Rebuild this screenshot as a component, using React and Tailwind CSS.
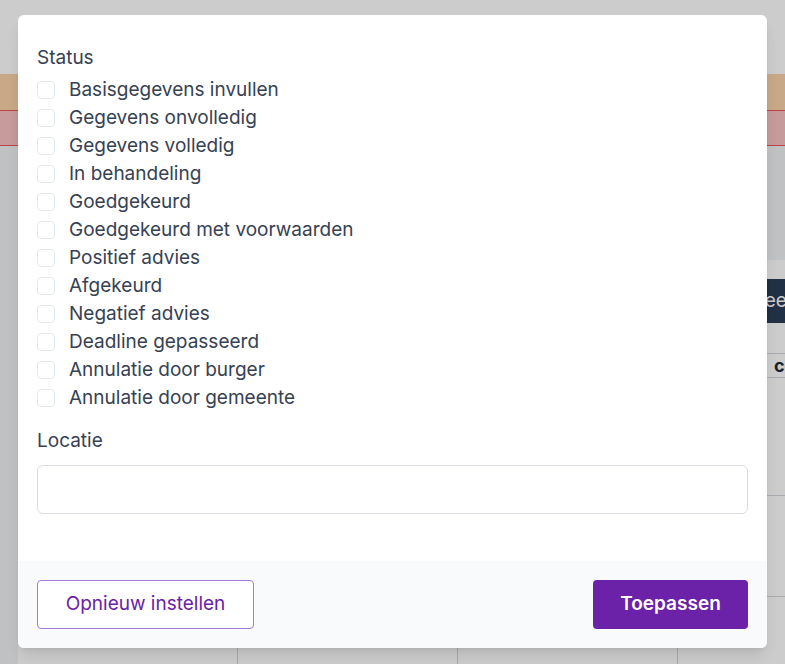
import React from 'react';

const statuses = [
  'Basisgegevens invullen',
  'Gegevens onvolledig',
  'Gegevens volledig',
  'In behandeling',
  'Goedgekeurd',
  'Goedgekeurd met voorwaarden',
  'Positief advies',
  'Afgekeurd',
  'Negatief advies',
  'Deadline gepasseerd',
  'Annulatie door burger',
  'Annulatie door gemeente',
];

function BackgroundPage() {
  // the page behind the dialog, mostly hidden
  return (
    <div className="flex h-full flex-col bg-[#f1f2f4]">
      <div className="h-[74px] shrink-0 bg-white" />
      <div className="h-[36px] shrink-0 bg-[#fad2a8]" />
      <div className="h-[36px] shrink-0 border-y border-[#f05252] bg-[#f9c1c3]" />
      <div className="flex flex-1 pl-[18px] pt-[114px]">
        <div className="flex flex-1 flex-col bg-white">
          <div className="flex h-[93px] items-start pt-[19px]">
            <div className="ml-[713px] flex h-[44px] shrink-0 items-center bg-[#2a3c55] px-4 text-[19px] text-white">
              Weergave
            </div>
          </div>
          <div className="flex flex-1 border-t border-[#d1d5db]">
            {[0, 1, 2, 3].map((i) => (
              <div key={i} className="flex w-[220px] shrink-0 flex-col border-r border-[#d1d5db]">
                <div className="flex h-[24px] items-center border-b border-[#d1d5db] pl-[96px] text-lg font-bold text-[#1f2937]">
                  {i === 3 ? 'code' : ''}
                </div>
                <div className="h-[118px] border-b border-[#d1d5db]" />
                <div className="h-[101px] border-b border-[#d1d5db]" />
              </div>
            ))}
          </div>
        </div>
      </div>
    </div>
  );
}

export default function App() {
  return (
    <div className="relative h-[664px] w-[785px] overflow-hidden font-['Inter',sans-serif]">
      <BackgroundPage />
      <div className="absolute inset-0 bg-black/20" />

      <div className="absolute left-[18px] top-[15px] flex h-[633px] w-[749px] flex-col overflow-hidden rounded-md bg-white shadow-lg">
        <div className="px-[19px] pt-[29px]">
          <div className="text-[19px] leading-7 text-gray-700">Status</div>
          <div className="mt-1 flex flex-col">
            {statuses.map((s) => (
              <label key={s} className="flex h-7 items-center gap-[14px]">
                <span className="h-[18px] w-[18px] shrink-0 rounded-[4px] border border-[#e2e8f0] bg-white" />
                <span className="text-[19px] leading-7 text-gray-700">{s}</span>
              </label>
            ))}
          </div>

          <div className="mt-[15px] text-[19px] leading-7 text-gray-700">Locatie</div>
          <input
            type="text"
            className="mt-[10px] h-[49px] w-full rounded-md border border-[#d9dce1] bg-white px-3 text-lg outline-none"
          />
        </div>

        <div className="mt-auto flex items-center justify-between bg-[#f9fafb] p-[19px]">
          <button className="h-[49px] w-[217px] rounded-[4px] border border-[#a57ad8] bg-white text-[19px] text-[#6b21a8]">
            Opnieuw instellen
          </button>
          <button className="h-[49px] w-[155px] rounded-[4px] bg-[#6b21a8] text-[19px] font-semibold text-white">
            Toepassen
          </button>
        </div>
      </div>
    </div>
  );
}
